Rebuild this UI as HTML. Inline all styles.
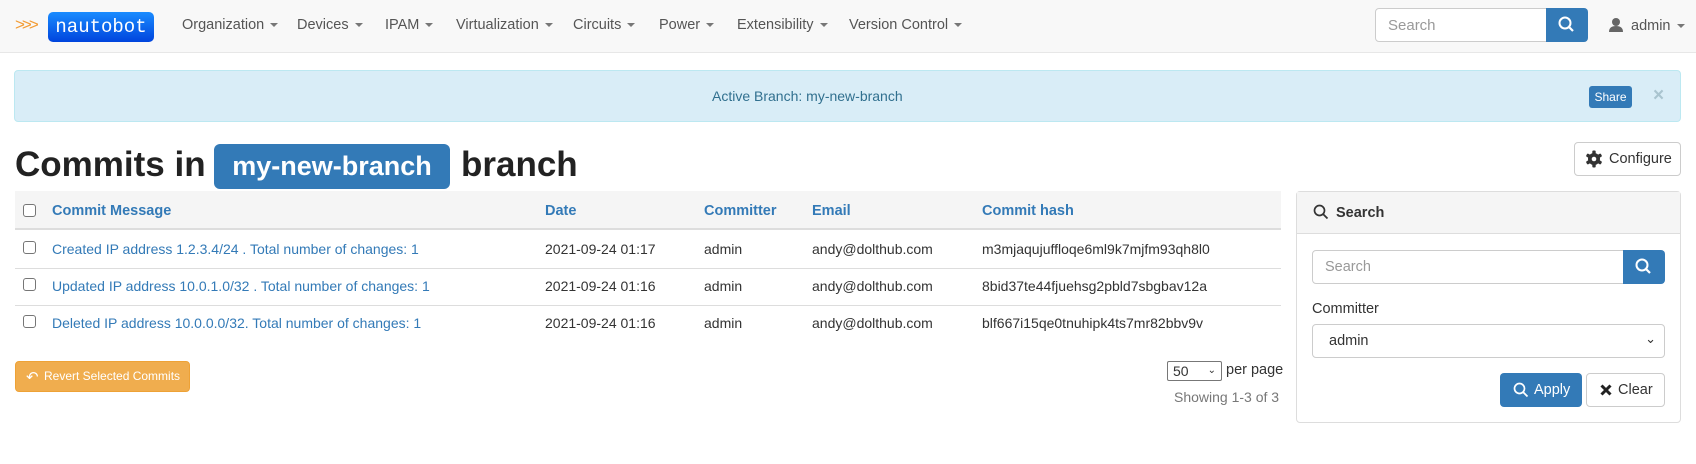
<!DOCTYPE html>
<html><head><meta charset="utf-8"><style>
*{box-sizing:border-box;margin:0;padding:0}
body{width:1696px;height:464px;overflow:hidden;background:#fff;font-family:"Liberation Sans",sans-serif;color:#333;position:relative}
.a{position:absolute;white-space:nowrap}
.nav{position:absolute;left:0;top:0;width:1696px;height:53px;background:#f8f8f8;border-bottom:1px solid #e7e7e7}
.ni{position:absolute;top:17px;font-size:14.5px;color:#555}
.caret{display:inline-block;width:0;height:0;border-left:4px solid transparent;border-right:4px solid transparent;border-top:4px solid #777;vertical-align:middle;margin-left:6px}
.th{position:absolute;top:203px;font-size:14.5px;font-weight:bold;color:#337ab7}
.td{position:absolute;font-size:14px;color:#333}
.lk{color:#337ab7}
.cb{position:absolute;left:23px;width:13px;height:13px;border:1px solid #767676;border-radius:3px;background:#fff}
</style></head><body>
<div class="nav">
 <div class="a" style="left:15px;top:15px;color:#f39c34;font-size:17px;letter-spacing:-3px">&gt;&gt;&gt;</div>
 <div class="a" style="left:48px;top:12px;width:106px;height:30px;background:linear-gradient(#1a8cff,#0044dd);border-radius:5px;color:#fff;font-family:'Liberation Mono',monospace;font-size:19px;line-height:30px;text-align:center">nautobot</div>
 <div class="ni" style="left:182px">Organization<span class="caret"></span></div>
 <div class="ni" style="left:297px">Devices<span class="caret"></span></div>
 <div class="ni" style="left:385px">IPAM<span class="caret"></span></div>
 <div class="ni" style="left:456px">Virtualization<span class="caret"></span></div>
 <div class="ni" style="left:573px">Circuits<span class="caret"></span></div>
 <div class="ni" style="left:659px">Power<span class="caret"></span></div>
 <div class="ni" style="left:737px">Extensibility<span class="caret"></span></div>
 <div class="ni" style="left:849px">Version Control<span class="caret"></span></div>
 <div class="a" style="left:1375px;top:8px;width:172px;height:34px;border:1px solid #ccc;border-radius:4px 0 0 4px;background:#fff;font-size:15px;color:#999;padding:8px 12px">Search</div>
 <div class="a" style="left:1546px;top:8px;width:42px;height:34px;background:#337ab7;border-radius:0 4px 4px 0">
  <svg width="42" height="34"><circle cx="19" cy="15" r="5.5" fill="none" stroke="#fff" stroke-width="2"/><line x1="23" y1="19" x2="27" y2="23" stroke="#fff" stroke-width="2.2"/></svg></div>
 <svg class="a" style="left:1608px;top:17px" width="16" height="16"><circle cx="8" cy="5" r="4" fill="#666"/><path d="M1 15 Q1 9 8 9 Q15 9 15 15Z" fill="#666"/></svg>
 <div class="ni" style="left:1631px;top:18px">admin<span class="caret"></span></div>
</div>
<div class="a" style="left:14px;top:70px;width:1667px;height:52px;background:#d9edf7;border:1px solid #bce8f1;border-radius:4px"></div>
<div class="a" style="left:712px;top:88px;font-size:14px;color:#31708f">Active Branch: my-new-branch</div>
<div class="a" style="left:1589px;top:86px;width:43px;height:22px;background:#337ab7;border-radius:3px;color:#fff;font-size:12px;line-height:22px;text-align:center">Share</div>
<div class="a" style="left:1653px;top:85px;font-size:19px;color:#a9c4cf;font-weight:bold">×</div>
<div class="a" style="left:15px;top:145px;font-size:35px;font-weight:bold;color:#222">Commits in</div>
<div class="a" style="left:214px;top:144px;width:236px;height:45px;background:#337ab7;border-radius:6px;color:#fff;font-weight:bold;font-size:27px;line-height:45px;text-align:center">my-new-branch</div>
<div class="a" style="left:461px;top:145px;font-size:35px;font-weight:bold;color:#222">branch</div>
<div class="a" style="left:1574px;top:142px;width:107px;height:34px;border:1px solid #ccc;border-radius:4px;font-size:14.5px;line-height:32px;padding-left:34px">Configure</div>
<svg class="a" style="left:1585px;top:150px" width="18" height="18" viewBox="0 0 18 18"><g fill="#333"><circle cx="9" cy="9" r="6"/><rect x="7.3" y="0.5" width="3.4" height="17" rx="1"/><rect x="7.3" y="0.5" width="3.4" height="17" rx="1" transform="rotate(60 9 9)"/><rect x="7.3" y="0.5" width="3.4" height="17" rx="1" transform="rotate(120 9 9)"/></g><circle cx="9" cy="9" r="2.3" fill="#fff"/></svg>

<div class="a" style="left:15px;top:191px;width:1266px;height:39px;background:#f5f5f5;border-bottom:2px solid #ddd"></div>
<div class="a" style="left:15px;top:268px;width:1266px;height:1px;background:#ddd"></div>
<div class="a" style="left:15px;top:305px;width:1266px;height:1px;background:#ddd"></div>
<div class="cb" style="top:204px"></div><div class="cb" style="top:241px"></div><div class="cb" style="top:278px"></div><div class="cb" style="top:315px"></div>
<div class="th" style="left:52px">Commit Message</div><div class="th" style="left:545px">Date</div><div class="th" style="left:704px">Committer</div><div class="th" style="left:812px">Email</div><div class="th" style="left:982px">Commit hash</div>
<div class="td lk" style="left:52px;top:241px">Created IP address 1.2.3.4/24 . Total number of changes: 1</div>
<div class="td lk" style="left:52px;top:278px">Updated IP address 10.0.1.0/32 . Total number of changes: 1</div>
<div class="td lk" style="left:52px;top:315px">Deleted IP address 10.0.0.0/32. Total number of changes: 1</div>
<div class="td" style="left:545px;top:241px">2021-09-24 01:17</div><div class="td" style="left:545px;top:278px">2021-09-24 01:16</div><div class="td" style="left:545px;top:315px">2021-09-24 01:16</div>
<div class="td" style="left:704px;top:241px">admin</div><div class="td" style="left:704px;top:278px">admin</div><div class="td" style="left:704px;top:315px">admin</div>
<div class="td" style="left:812px;top:241px">andy@dolthub.com</div><div class="td" style="left:812px;top:278px">andy@dolthub.com</div><div class="td" style="left:812px;top:315px">andy@dolthub.com</div>
<div class="td" style="left:982px;top:241px">m3mjaqujuffloqe6ml9k7mjfm93qh8l0</div><div class="td" style="left:982px;top:278px">8bid37te44fjuehsg2pbld7sbgbav12a</div><div class="td" style="left:982px;top:315px">blf667i15qe0tnuhipk4ts7mr82bbv9v</div>

<div class="a" style="left:15px;top:361px;width:175px;height:31px;background:#f0ad4e;border:1px solid #eea236;border-radius:4px;color:#fff;font-size:12px;line-height:29px;padding-left:28px">Revert Selected Commits</div>
<div class="a" style="left:26px;top:368px;color:#fff;font-size:15px">↶</div>
<div class="a" style="left:1167px;top:361px;width:55px;height:20px;border:1px solid #777;border-radius:2px;font-size:14px;padding-left:5px;line-height:18px">50<span style="position:absolute;right:5px;font-size:10px">⌄</span></div>
<div class="a" style="left:1226px;top:362px;font-size:14.5px">per page</div>
<div class="a" style="left:1174px;top:389px;font-size:14px;color:#777">Showing 1-3 of 3</div>

<div class="a" style="left:1296px;top:191px;width:385px;height:232px;border:1px solid #ddd;border-radius:4px"></div>
<div class="a" style="left:1297px;top:192px;width:383px;height:42px;background:#f5f5f5;border-bottom:1px solid #ddd"></div>
<svg class="a" style="left:1313px;top:204px" width="16" height="16"><circle cx="6.5" cy="6.5" r="5" fill="none" stroke="#333" stroke-width="1.7"/><line x1="10" y1="10" x2="14.5" y2="14.5" stroke="#333" stroke-width="1.8"/></svg>
<div class="a" style="left:1336px;top:205px;font-size:14.5px;font-weight:bold">Search</div>
<div class="a" style="left:1312px;top:250px;width:312px;height:34px;border:1px solid #ccc;border-radius:4px 0 0 4px;font-size:14.5px;color:#999;padding:8px 12px">Search</div>
<div class="a" style="left:1623px;top:250px;width:42px;height:34px;background:#337ab7;border-radius:0 4px 4px 0"><svg width="42" height="34"><circle cx="19" cy="15" r="5.5" fill="none" stroke="#fff" stroke-width="2"/><line x1="23" y1="19" x2="27" y2="23" stroke="#fff" stroke-width="2.2"/></svg></div>
<div class="a" style="left:1312px;top:301px;font-size:14.5px">Committer</div>
<div class="a" style="left:1312px;top:324px;width:353px;height:34px;border:1px solid #ccc;border-radius:4px;font-size:14.5px;padding:8px 16px">admin<span style="position:absolute;right:8px;top:6px;font-size:13px">⌄</span></div>
<div class="a" style="left:1500px;top:373px;width:82px;height:34px;background:#337ab7;border-radius:4px;color:#fff;font-size:14.5px;line-height:34px;padding-left:34px">Apply</div>
<svg class="a" style="left:1513px;top:382px" width="16" height="16"><circle cx="6.5" cy="6.5" r="5" fill="none" stroke="#fff" stroke-width="1.7"/><line x1="10" y1="10" x2="14.5" y2="14.5" stroke="#fff" stroke-width="1.8"/></svg>
<div class="a" style="left:1586px;top:373px;width:79px;height:34px;border:1px solid #ccc;border-radius:4px;font-size:14.5px;line-height:32px;padding-left:31px">Clear</div>
<svg class="a" style="left:1600px;top:384px" width="12" height="12"><path d="M1.5 1.5L10.5 10.5M10.5 1.5L1.5 10.5" stroke="#222" stroke-width="3"/></svg>
</body></html>
